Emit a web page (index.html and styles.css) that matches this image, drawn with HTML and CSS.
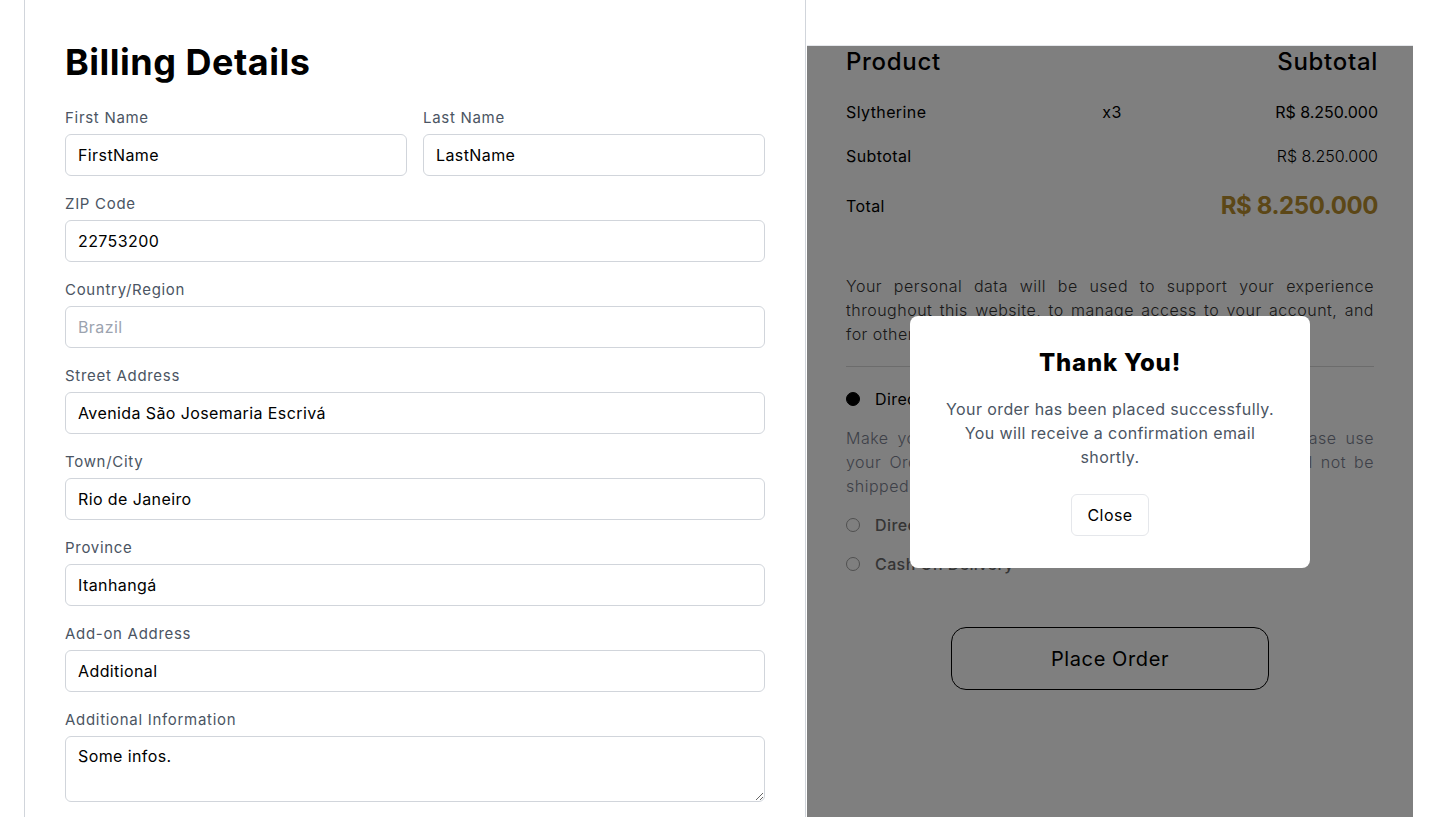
FILE: index.html
```html
<!DOCTYPE html>
<html lang="en">
<head>
<meta charset="utf-8">
<title>Checkout</title>
<link rel="stylesheet" href="styles.css">
</head>
<body>
<div class="page">
  <section class="billing">
    <h1 class="billing-title">Billing Details</h1>
    <div class="row-2">
      <div class="field">
        <label class="label">First Name</label>
        <input class="input" type="text" value="FirstName">
      </div>
      <div class="field">
        <label class="label">Last Name</label>
        <input class="input" type="text" value="LastName">
      </div>
    </div>
    <div class="field">
      <label class="label">ZIP Code</label>
      <input class="input" type="text" value="22753200">
    </div>
    <div class="field">
      <label class="label">Country/Region</label>
      <input class="input" type="text" placeholder="Brazil">
    </div>
    <div class="field">
      <label class="label">Street Address</label>
      <input class="input" type="text" value="Avenida São Josemaria Escrivá">
    </div>
    <div class="field">
      <label class="label">Town/City</label>
      <input class="input" type="text" value="Rio de Janeiro">
    </div>
    <div class="field">
      <label class="label">Province</label>
      <input class="input" type="text" value="Itanhangá">
    </div>
    <div class="field">
      <label class="label">Add-on Address</label>
      <input class="input" type="text" value="Additional">
    </div>
    <div class="field">
      <label class="label">Additional Information</label>
      <textarea class="input textarea">Some infos.</textarea>
    </div>
  </section>

  <section class="summary">
    <div class="summary-inner">
      <div class="sum-head">
        <span>Product</span>
        <span>Subtotal</span>
      </div>
      <div class="sum-item">
        <span>Slytherine</span>
        <span class="qty">x3</span>
        <span class="right amount">R$ 8.250.000</span>
      </div>
      <div class="sum-row">
        <span>Subtotal</span>
        <span class="light amount">R$ 8.250.000</span>
      </div>
      <div class="sum-total">
        <span>Total</span>
        <span class="total-amount">R$ 8.250.000</span>
      </div>

      <p class="privacy"><span class="jl">Your personal data will be used to support your experience</span> <span class="jl">throughout this website, to manage access to your account, and</span> <span class="jl-last">for other purposes described in our privacy policy.</span></p>
      <hr class="divider">

      <div class="pay-option active">
        <span class="radio radio-on"></span>
        <span>Direct Bank Transfer</span>
      </div>
      <p class="pay-desc"><span class="jl">Make your payment directly into our bank account. Please use</span> <span class="jl">your Order ID as the payment reference. Your order will not be</span> <span class="jl-last">shipped until the funds have cleared in our account.</span></p>
      <div class="pay-option">
        <span class="radio"></span>
        <span>Direct Bank Transfer</span>
      </div>
      <div class="pay-option">
        <span class="radio"></span>
        <span>Cash On Delivery</span>
      </div>

      <div class="order-wrap">
        <button class="order-btn">Place Order</button>
      </div>
    </div>

    <div class="overlay">
      <div class="modal">
        <h2 class="modal-title">Thank You!</h2>
        <p class="modal-text">Your order has been placed successfully. You will receive a confirmation email shortly.</p>
        <button class="modal-btn">Close</button>
      </div>
    </div>
  </section>
</div>
</body>
</html>
```
FILE: styles.css
```css
* { box-sizing: border-box; }

body {
  margin: 0;
  background: #fff;
  font-family: "Inter", "Open Sans", "DejaVu Sans", sans-serif;
  color: #000;
  letter-spacing: 0.4px;
}

.page {
  display: flex;
  margin: 0 24px;
}

.billing {
  width: 782px;
  flex: none;
  border-left: 1px solid #d1d5db;
  border-right: 1px solid #d1d5db;
  padding: 42px 40px 40px 40px;
}

.billing-title {
  margin: 0 0 23px;
  font-size: 36px;
  line-height: 40px;
  font-weight: 700;
  letter-spacing: 0.5px;
}

.row-2 {
  display: grid;
  grid-template-columns: 1fr 1fr;
  gap: 16px;
}

.field {
  display: flex;
  flex-direction: column;
  margin-bottom: 15px;
}

.label {
  font-size: 15px;
  line-height: 24px;
  color: #4b5563;
  margin-top: 1px;
  margin-bottom: 4px;
  letter-spacing: 0.7px;
}

.input {
  height: 42px;
  border: 1px solid #d1d5db;
  border-radius: 6px;
  padding: 0 12px 1px;
  font-family: inherit;
  font-size: 16px;
  letter-spacing: 0.4px;
  color: #000;
  background: #fff;
  outline: none;
}

.input::placeholder { color: #9ca3af; }

.textarea {
  height: 66px;
  padding: 7px 12px;
  line-height: 24px;
  resize: vertical;
}

.summary {
  flex: 1;
  position: relative;
  padding-top: 46px;
}

.summary-inner {
  padding: 0 36px 0 40px;
}

.sum-head {
  display: flex;
  justify-content: space-between;
  font-size: 24px;
  line-height: 32px;
  font-weight: 500;
  letter-spacing: 0.7px;
}

.sum-item {
  display: grid;
  grid-template-columns: 1fr auto 1fr;
  margin-top: 22px;
  font-size: 16px;
  line-height: 24px;
}

.sum-item .right { text-align: right; }

.amount { letter-spacing: 0; }

.sum-row {
  display: flex;
  justify-content: space-between;
  margin-top: 20px;
  font-size: 16px;
  line-height: 24px;
}

.light { font-weight: 300; }

.sum-total {
  display: flex;
  justify-content: space-between;
  align-items: center;
  margin-top: 22px;
  font-size: 16px;
  line-height: 32px;
}

.total-amount {
  font-size: 24px;
  font-weight: 700;
  letter-spacing: -0.4px;
  color: #b88e2f;
}

.privacy,
.pay-desc {
  font-size: 16px;
  line-height: 24px;
  font-weight: 300;
  letter-spacing: 0.5px;
}

.jl {
  display: block;
  text-align: justify;
  text-align-last: justify;
}

.jl-last {
  display: block;
  text-align: left;
}

.privacy {
  margin: 52px 4px 0 0;
  color: #333;
}

.divider {
  border: 0;
  border-top: 1px solid #d9d9d9;
  margin: 20px 4px 20px 0;
}

.pay-option {
  display: flex;
  align-items: center;
  gap: 15px;
  font-size: 16px;
  line-height: 24px;
  font-weight: 500;
  color: #6b6b6b;
}

.pay-option.active { color: #000; font-weight: 400; }

.pay-option + .pay-option { margin-top: 15px; }

.radio {
  width: 14px;
  height: 14px;
  border-radius: 50%;
  border: 1px solid #9f9f9f;
  flex: none;
}

.radio-on {
  background: #000;
  border-color: #000;
}

.pay-desc {
  margin: 15px 4px 15px 0;
  color: #7b8190;
}

.order-wrap {
  display: flex;
  justify-content: center;
  margin-top: 51px;
  padding-right: 4px;
}

.order-btn {
  width: 318px;
  height: 63px;
  border: 1px solid #000;
  border-radius: 15px;
  background: #fff;
  font-family: inherit;
  font-size: 20px;
  letter-spacing: 0.6px;
  color: #000;
}

.overlay {
  position: absolute;
  top: 45px;
  left: 1px;
  right: 1px;
  height: 792px;
  border-top: 1px solid #e5e7eb;
  background: rgba(0, 0, 0, 0.5);
  display: flex;
  align-items: center;
  justify-content: center;
}

.modal {
  width: 400px;
  background: #fff;
  border-radius: 8px;
  padding: 31px 32px 32px;
  text-align: center;
}

.modal-title {
  margin: 0 0 18px;
  font-size: 24px;
  line-height: 32px;
  font-weight: 800;
  letter-spacing: 0.8px;
}

.modal-text {
  margin: 0 0 25px;
  font-size: 16px;
  line-height: 24px;
  color: #4b5563;
}

.modal-btn {
  height: 42px;
  padding: 0 16px;
  border: 1px solid #e5e7eb;
  border-radius: 6px;
  background: #fff;
  font-family: inherit;
  font-size: 16px;
  letter-spacing: 0.4px;
  color: #000;
}
```
